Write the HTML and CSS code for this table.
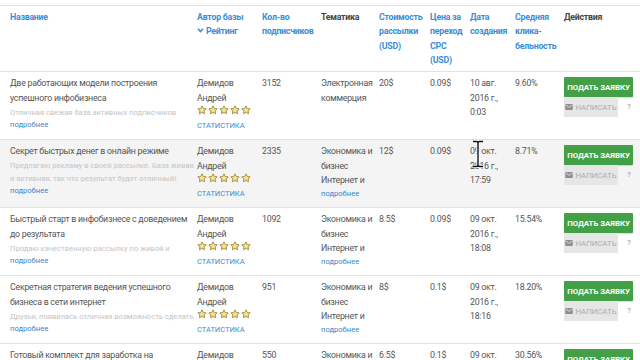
FILE: index.html
```html
<!DOCTYPE html>
<html lang="ru">
<head>
<meta charset="utf-8">
<title>Базы рассылок</title>
<link rel="stylesheet" href="styles.css">
</head>
<body>
<svg width="0" height="0" class="defs">
  <defs>
    <symbol id="star" viewBox="0 0 24 24"><polygon points="12,2 15.09,8.26 22,9.27 17,14.14 18.18,21.02 12,17.77 5.82,21.02 7,14.14 2,9.27 8.91,8.26" fill="#ede0a4" stroke="#ad923c" stroke-width="2.4" stroke-linejoin="round"/></symbol>
    <symbol id="mail" viewBox="0 0 10 8"><rect x="0" y="0" width="10" height="8" rx="1" fill="#8f8f8f"/><polyline points="0.8,1.2 5,4.6 9.2,1.2" fill="none" stroke="#e6e6e6" stroke-width="1.1"/></symbol>
  </defs>
</svg>
<div class="table">
  <div class="row head">
    <div class="c"><a class="h">Название</a></div>
    <div class="c"><a class="h">Автор базы</a><a class="h sort"><svg class="chev" viewBox="0 0 8 6" width="7" height="5"><polyline points="1,1 4,4.3 7,1" fill="none" stroke="#3a8ed6" stroke-width="1.8"/></svg> Рейтинг</a></div>
    <div class="c"><a class="h">Кол-во подписчиков</a></div>
    <div class="c"><span class="h dark">Тематика</span></div>
    <div class="c"><a class="h">Стоимость рассылки (USD)</a></div>
    <div class="c"><a class="h">Цена за переход CPC (USD)</a></div>
    <div class="c"><a class="h">Дата создания</a></div>
    <div class="c"><a class="h">Средняя клика-бельность</a></div>
    <div class="c"><span class="h dark">Действия</span></div>
  </div>

  <div class="row">
    <div class="c name"><div class="title">Две работающих модели построения успешного инфобизнеса</div><div class="desc">Отличная свежая база активных подписчиков</div><a class="more">подробнее</a></div>
    <div class="c"><div>Демидов Андрей</div><div class="stars"><svg><use href="#star"/></svg><svg><use href="#star"/></svg><svg><use href="#star"/></svg><svg><use href="#star"/></svg><svg><use href="#star"/></svg></div><a class="stat">СТАТИСТИКА</a></div>
    <div class="c">3152</div>
    <div class="c">Электронная коммерция</div>
    <div class="c">20$</div>
    <div class="c">0.09$</div>
    <div class="c">10 авг. 2016 г., 0:03</div>
    <div class="c">9.60%</div>
    <div class="c act"><button class="btn go">ПОДАТЬ ЗАЯВКУ</button><div class="line"><button class="btn write"><svg class="mail"><use href="#mail"/></svg>НАПИСАТЬ</button><span class="q">?</span></div></div>
  </div>

  <div class="row alt">
    <div class="c name"><div class="title">Секрет быстрых денег в онлайн режиме</div><div class="desc">Предлагаю рекламу в своей рассылке. База живая и активная, так что результат будет отличный!</div><a class="more">подробнее</a></div>
    <div class="c"><div>Демидов Андрей</div><div class="stars"><svg><use href="#star"/></svg><svg><use href="#star"/></svg><svg><use href="#star"/></svg><svg><use href="#star"/></svg><svg><use href="#star"/></svg></div><a class="stat">СТАТИСТИКА</a></div>
    <div class="c">2335</div>
    <div class="c"><div>Экономика и бизнес</div><div>Интернет и</div><a class="more">подробнее</a></div>
    <div class="c">12$</div>
    <div class="c">0.09$</div>
    <div class="c">09 окт. 2016 г., 17:59</div>
    <div class="c">8.71%</div>
    <div class="c act"><button class="btn go">ПОДАТЬ ЗАЯВКУ</button><div class="line"><button class="btn write"><svg class="mail"><use href="#mail"/></svg>НАПИСАТЬ</button><span class="q">?</span></div></div>
  </div>

  <div class="row">
    <div class="c name"><div class="title">Быстрый старт в инфобизнесе с доведением до результата</div><div class="desc">Продаю качественную рассылку по живой и</div><a class="more">подробнее</a></div>
    <div class="c"><div>Демидов Андрей</div><div class="stars"><svg><use href="#star"/></svg><svg><use href="#star"/></svg><svg><use href="#star"/></svg><svg><use href="#star"/></svg><svg><use href="#star"/></svg></div><a class="stat">СТАТИСТИКА</a></div>
    <div class="c">1092</div>
    <div class="c"><div>Экономика и бизнес</div><div>Интернет и</div><a class="more">подробнее</a></div>
    <div class="c">8.5$</div>
    <div class="c">0.09$</div>
    <div class="c">09 окт. 2016 г., 18:08</div>
    <div class="c">15.54%</div>
    <div class="c act"><button class="btn go">ПОДАТЬ ЗАЯВКУ</button><div class="line"><button class="btn write"><svg class="mail"><use href="#mail"/></svg>НАПИСАТЬ</button><span class="q">?</span></div></div>
  </div>

  <div class="row">
    <div class="c name"><div class="title">Секретная стратегия ведения успешного бизнеса в сети интернет</div><div class="desc">Друзья, появилась отличная возможность сделать</div><a class="more">подробнее</a></div>
    <div class="c"><div>Демидов Андрей</div><div class="stars"><svg><use href="#star"/></svg><svg><use href="#star"/></svg><svg><use href="#star"/></svg><svg><use href="#star"/></svg><svg><use href="#star"/></svg></div><a class="stat">СТАТИСТИКА</a></div>
    <div class="c">951</div>
    <div class="c"><div>Экономика и бизнес</div><div>Интернет и</div><a class="more">подробнее</a></div>
    <div class="c">8$</div>
    <div class="c">0.1$</div>
    <div class="c">09 окт. 2016 г., 18:16</div>
    <div class="c">18.20%</div>
    <div class="c act"><button class="btn go">ПОДАТЬ ЗАЯВКУ</button><div class="line"><button class="btn write"><svg class="mail"><use href="#mail"/></svg>НАПИСАТЬ</button><span class="q">?</span></div></div>
  </div>

  <div class="row">
    <div class="c name"><div class="title">Готовый комплект для заработка на автопилоте</div></div>
    <div class="c"><div>Демидов Андрей</div></div>
    <div class="c">550</div>
    <div class="c"><div>Экономика и бизнес</div></div>
    <div class="c">6.5$</div>
    <div class="c">0.1$</div>
    <div class="c">09 окт. 2016 г., 18:20</div>
    <div class="c">30.56%</div>
    <div class="c act"><button class="btn go">ПОДАТЬ ЗАЯВКУ</button></div>
  </div>
</div>
<svg class="cursor" viewBox="0 0 12 28" width="12" height="28"><path d="M1,1.5 H4.5 Q6,1.5 6,3 Q6,1.5 7.5,1.5 H11 M6,3 V25 M1,26.5 H4.5 Q6,26.5 6,25 Q6,26.5 7.5,26.5 H11" fill="none" stroke="#fff" stroke-width="3"/><path d="M1,1.5 H4.5 Q6,1.5 6,3 Q6,1.5 7.5,1.5 H11 M6,3 V25 M1,26.5 H4.5 Q6,26.5 6,25 Q6,26.5 7.5,26.5 H11" fill="none" stroke="#111" stroke-width="1.4"/></svg>
</body>
</html>
```
FILE: styles.css
```css
html, body {
  margin: 0;
  padding: 0;
  background: #fff;
}
body {
  font-family: Roboto, "Noto Sans", "DejaVu Sans", sans-serif;
  font-size: 8.8px;
  letter-spacing: -0.25px;
  line-height: 14.6px;
  color: #555;
  position: relative;
  height: 360px;
  overflow: hidden;
}
.defs {
  position: absolute;
  width: 0;
  height: 0;
}
.table {
  padding-top: 5px;
}
.row {
  display: grid;
  grid-template-columns: 187px 65px 59px 58px 51px 40px 45px 49px 1fr;
  padding-left: 10px;
  border-top: 1px solid #e2e2e2;
  min-height: 67px;
}
.row.head {
  min-height: 65px;
  line-height: 14.4px;
}
.row.alt {
  background: #f4f4f4;
}
.c {
  padding: 4px 4px 0 0;
}
.head .c {
  padding-top: 4px;
}
.h {
  display: block;
  color: #3a8ed6;
  font-weight: 700;
}
.h.dark {
  color: #444;
}
.chev {
  vertical-align: 1px;
}
.name {
  padding-right: 3px;
}
.title {
  line-height: 15px;
}
.desc {
  font-size: 7.6px;
  letter-spacing: 0;
  line-height: 13px;
  color: #c4c4c4;
}
.more {
  display: block;
  font-size: 7.6px;
  letter-spacing: 0;
  line-height: 11px;
  color: #3a86cc;
}
.stars {
  display: flex;
  gap: 1px;
  height: 10px;
  margin: 0 0 3px;
}
.stars svg {
  width: 10px;
  height: 10px;
}
.stat {
  display: block;
  font-size: 7.5px;
  letter-spacing: 0;
  line-height: 16px;
  color: #3a8ed6;
}
.act {
  padding-top: 5px;
  padding-right: 0;
}
.btn {
  display: block;
  border: 0;
  margin: 0;
  font-family: inherit;
  font-size: 7.8px;
  letter-spacing: 0;
  font-weight: 700;
  height: 20px;
  padding: 0;
  border-radius: 1px;
}
.go {
  width: 69px;
  background: #43a047;
  color: #fff;
  box-shadow: 0 1px 1px rgba(0,0,0,0.15);
}
.line {
  display: flex;
  align-items: center;
  gap: 9px;
}
.write {
  width: 54px;
  background: #e6e6e6;
  color: #acacac;
  font-weight: 400;
  display: flex;
  align-items: center;
  justify-content: center;
  gap: 2px;
}
.mail {
  width: 8px;
  height: 6px;
}
.q {
  font-size: 8px;
  color: #999;
}
.cursor {
  position: absolute;
  left: 472px;
  top: 140px;
}
```
